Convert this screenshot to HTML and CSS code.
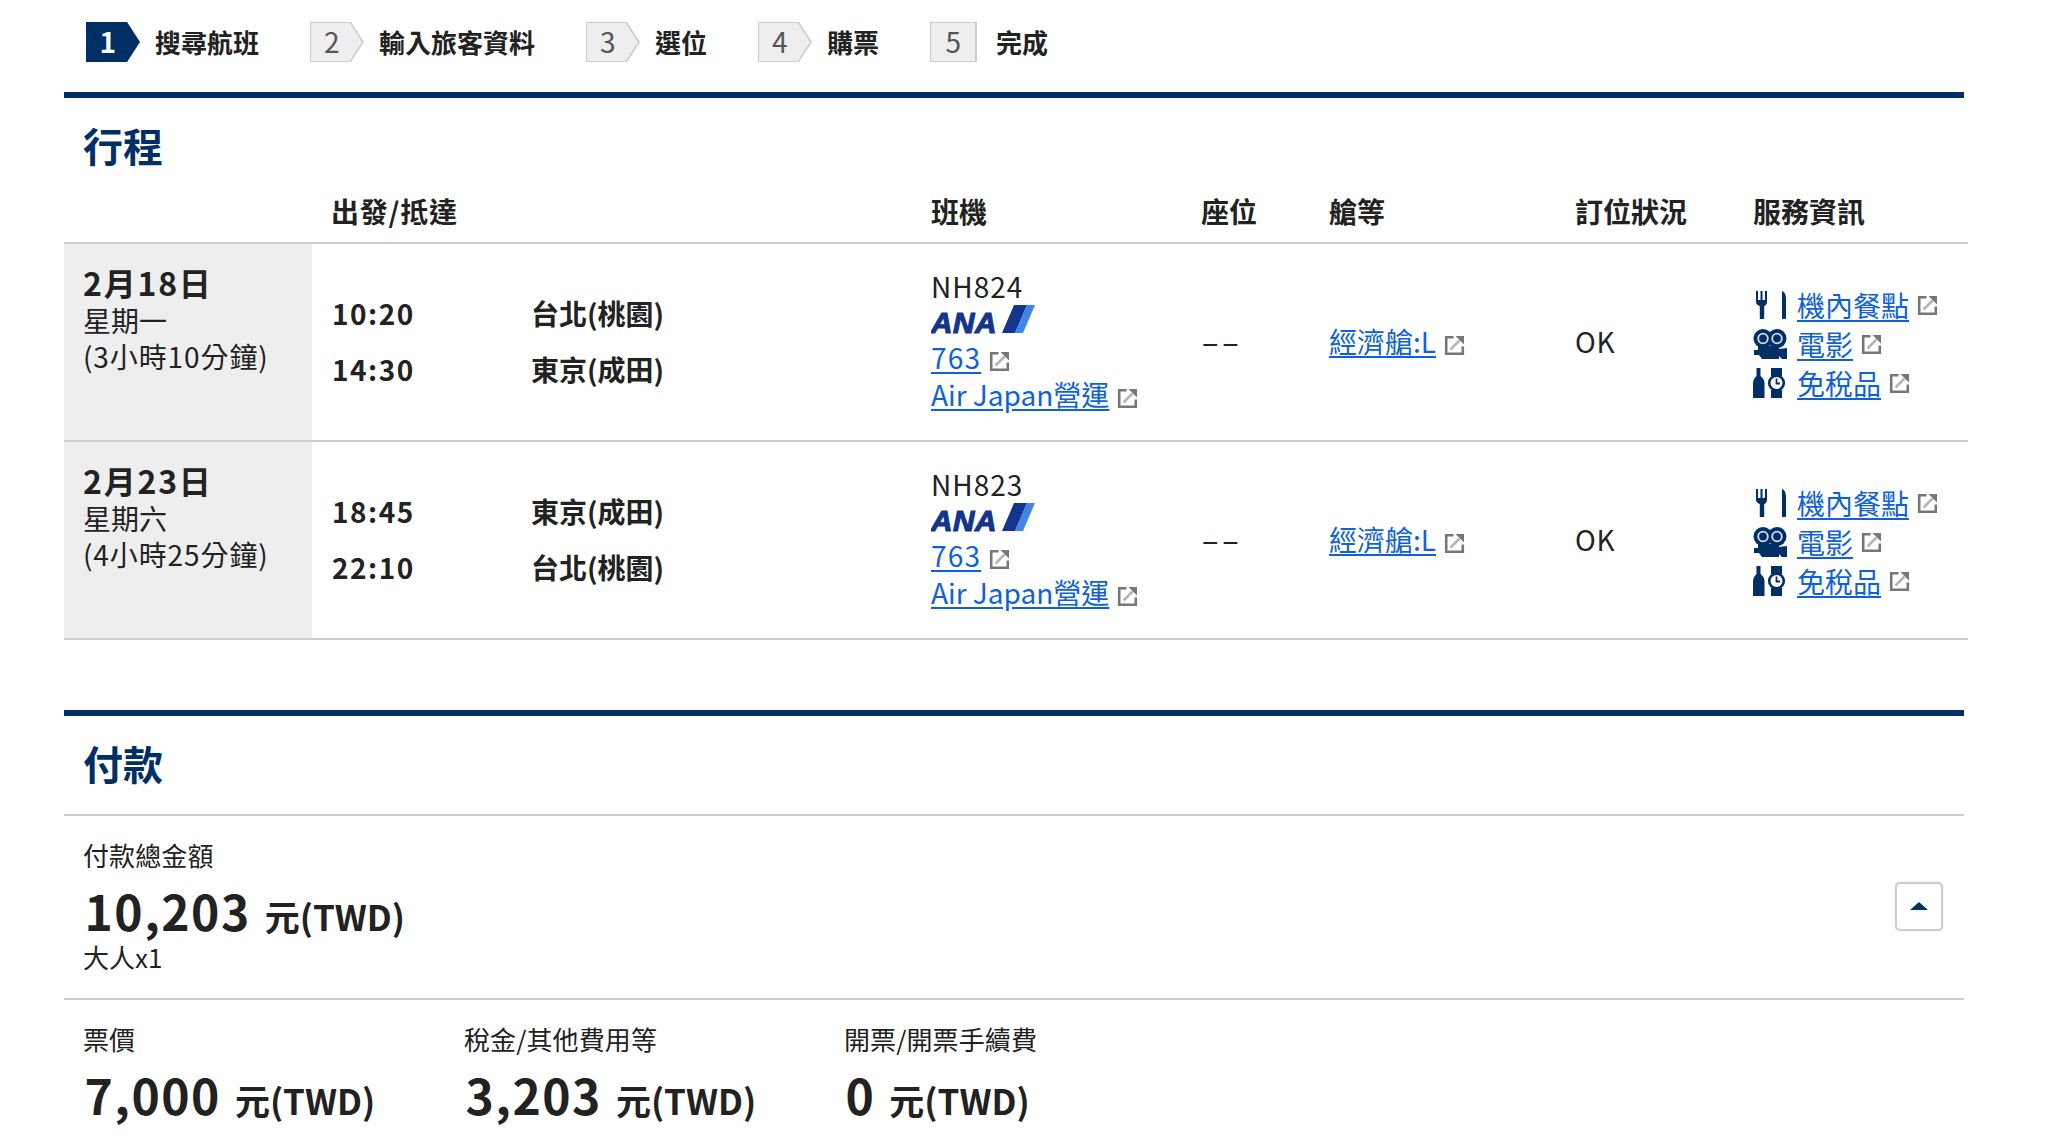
FILE: index.html
```html
<!DOCTYPE html>
<html lang="zh-Hant">
<head>
<meta charset="utf-8">
<title>行程</title>
<link rel="stylesheet" href="styles.css">
</head>
<body>
<svg class="defs" width="0" height="0" aria-hidden="true">
  <symbol id="ext" viewBox="0 0 21 21">
    <path d="M9.500 2.200H2.200v16.600h16.600v-7.300" fill="none" stroke="#777" stroke-width="2.600"/>
    <path d="M11.500 1h8.500v8.500z" fill="#777"/>
    <path d="M6.500 14.500l9-9" fill="none" stroke="#b5b5b5" stroke-width="2.600"/>
  </symbol>
  <symbol id="meal" viewBox="0 0 34 30">
    <path d="M3 1h2v9h2.500V1h2v9H12V1h2v11c0 2.500-1.500 3.500-2.800 4.200V29H6.800V16.200C5.500 15.500 3 14.500 3 12z" fill="#002f66"/>
    <path d="M29 1c3 1 4 4 4 9v18c0 .700-.5 1-1.500 1H30c-1 0-1-.3-1-1z" fill="#002f66"/>
  </symbol>
  <symbol id="movie" viewBox="0 0 34 30">
    <circle cx="10" cy="9.500" r="9.500" fill="#002f66"/>
    <circle cx="24" cy="9.500" r="9.500" fill="#002f66"/>
    <circle cx="10" cy="9.500" r="4.800" fill="#002f66" stroke="#d7dfe9" stroke-width="1.800"/>
    <circle cx="24" cy="9.500" r="4.800" fill="#002f66" stroke="#d7dfe9" stroke-width="1.800"/>
    <path d="M5 17h21v3l8-1v11h-5l-3-3v3H9l-3-4H1v-5h4z" fill="#002f66"/>
  </symbol>
  <symbol id="shop" viewBox="0 0 34 30">
    <path d="M3.500 0h4v8c2.500 2 4 4 4 7v15H0V15c0-3 1.500-5 3.500-7z" fill="#002f66"/>
    <path d="M18 0h11v8H18zM18 22h11v8H18z" fill="#002f66"/>
    <circle cx="23.500" cy="15" r="7.300" fill="#fff" stroke="#002f66" stroke-width="2.600"/>
    <path d="M23.500 10.500v5h3.500" fill="none" stroke="#002f66" stroke-width="1.800"/>
  </symbol>
</svg>

<ol class="steps">
  <li class="step step-now"><span class="step-num">1</span><span class="step-label">搜尋航班</span></li>
  <li class="step"><span class="step-num">2</span><span class="step-label">輸入旅客資料</span></li>
  <li class="step"><span class="step-num">3</span><span class="step-label">選位</span></li>
  <li class="step"><span class="step-num">4</span><span class="step-label">購票</span></li>
  <li class="step step-last"><span class="step-num">5</span><span class="step-label">完成</span></li>
</ol>

<section class="section">
  <h2 class="title">行程</h2>
  <div class="table">
    <div class="row head">
      <div class="cell-date"></div>
      <div class="cell-route head-route">出發/抵達</div>
      <div>班機</div>
      <div>座位</div>
      <div>艙等</div>
      <div>訂位狀況</div>
      <div>服務資訊</div>
    </div>

    <div class="row">
      <div class="cell-date">
        <div class="date">2月18日</div>
        <div class="sub">星期一</div>
        <div class="sub dur">(3小時10分鐘)</div>
      </div>
      <div class="cell-route route">
        <span class="time">10:20</span><span class="city">台北(桃園)</span>
        <span class="time">14:30</span><span class="city">東京(成田)</span>
      </div>
      <div class="flight">
        <div class="no">NH824</div>
        <svg class="ana" viewBox="0 0 104 36">
          <text class="ana-text" x="0" y="28" textLength="66" lengthAdjust="spacingAndGlyphs">ANA</text>
          <path class="ana-dark" d="M83 0h13L84 28H71z"/>
          <path class="ana-light" d="M96 0h8L92 28h-8z"/>
        </svg>
        <div><a class="link link-num" href="#">763</a><svg class="ext"><use href="#ext"/></svg></div>
        <div><a class="link" href="#">Air Japan營運</a><svg class="ext"><use href="#ext"/></svg></div>
      </div>
      <div class="seat"><span class="dash">--</span></div>
      <div class="mid"><a class="link" href="#">經濟艙:L</a><svg class="ext"><use href="#ext"/></svg></div>
      <div class="mid">OK</div>
      <div class="services">
        <div class="service"><svg class="svc"><use href="#meal"/></svg><a class="link" href="#">機內餐點</a><svg class="ext"><use href="#ext"/></svg></div>
        <div class="service"><svg class="svc"><use href="#movie"/></svg><a class="link" href="#">電影</a><svg class="ext"><use href="#ext"/></svg></div>
        <div class="service"><svg class="svc"><use href="#shop"/></svg><a class="link" href="#">免稅品</a><svg class="ext"><use href="#ext"/></svg></div>
      </div>
    </div>

    <div class="row">
      <div class="cell-date">
        <div class="date">2月23日</div>
        <div class="sub">星期六</div>
        <div class="sub dur">(4小時25分鐘)</div>
      </div>
      <div class="cell-route route">
        <span class="time">18:45</span><span class="city">東京(成田)</span>
        <span class="time">22:10</span><span class="city">台北(桃園)</span>
      </div>
      <div class="flight">
        <div class="no">NH823</div>
        <svg class="ana" viewBox="0 0 104 36">
          <text class="ana-text" x="0" y="28" textLength="66" lengthAdjust="spacingAndGlyphs">ANA</text>
          <path class="ana-dark" d="M83 0h13L84 28H71z"/>
          <path class="ana-light" d="M96 0h8L92 28h-8z"/>
        </svg>
        <div><a class="link link-num" href="#">763</a><svg class="ext"><use href="#ext"/></svg></div>
        <div><a class="link" href="#">Air Japan營運</a><svg class="ext"><use href="#ext"/></svg></div>
      </div>
      <div class="seat"><span class="dash">--</span></div>
      <div class="mid"><a class="link" href="#">經濟艙:L</a><svg class="ext"><use href="#ext"/></svg></div>
      <div class="mid">OK</div>
      <div class="services">
        <div class="service"><svg class="svc"><use href="#meal"/></svg><a class="link" href="#">機內餐點</a><svg class="ext"><use href="#ext"/></svg></div>
        <div class="service"><svg class="svc"><use href="#movie"/></svg><a class="link" href="#">電影</a><svg class="ext"><use href="#ext"/></svg></div>
        <div class="service"><svg class="svc"><use href="#shop"/></svg><a class="link" href="#">免稅品</a><svg class="ext"><use href="#ext"/></svg></div>
      </div>
    </div>
  </div>
</section>

<section class="section pay">
  <h2 class="title title-ruled">付款</h2>
  <div class="total">
    <div>
      <div class="pay-label">付款總金額</div>
      <div class="amount">10,203<span class="unit">元(TWD)</span></div>
      <div class="pax">大人x1</div>
    </div>
    <button class="toggle" type="button" aria-label="收合"><span class="tri"></span></button>
  </div>
  <div class="breakdown">
    <div>
      <div class="pay-label">票價</div>
      <div class="amount">7,000<span class="unit">元(TWD)</span></div>
    </div>
    <div>
      <div class="pay-label">稅金/其他費用等</div>
      <div class="amount">3,203<span class="unit">元(TWD)</span></div>
    </div>
    <div>
      <div class="pay-label">開票/開票手續費</div>
      <div class="amount">0<span class="unit">元(TWD)</span></div>
    </div>
  </div>
</section>
</body>
</html>
```

FILE: styles.css
```css
* { box-sizing: border-box; }
html, body { margin: 0; padding: 0; height: 1146px; overflow: hidden; background: #fff; }
body {
  font-family: "Noto Sans CJK TC", "Noto Sans", sans-serif;
  color: #222;
  font-size: 28px;
  letter-spacing: 0.6px;
  line-height: 36px;
}
.defs { position: absolute; }

/* Steps */
.steps {
  list-style: none;
  display: flex;
  margin: 0;
  padding: 22px 0 0 86px;
  height: 92px;
  gap: 51px;
}
.step { display: flex; align-items: center; height: 40px; gap: 15px; }
.step-num {
  position: relative;
  width: 54px;
  height: 40px;
  padding-right: 10px;
  text-align: center;
  font-size: 28px;
  line-height: 38px;
  color: #555;
  isolation: isolate;
}
.step-num::before, .step-num::after {
  content: "";
  position: absolute;
  z-index: -1;
  clip-path: polygon(0 0, 76% 0, 100% 50%, 76% 100%, 0 100%);
}
.step-num::before { inset: 0; background: #ccc; }
.step-num::after { inset: 1px 2px 1px 1px; background: #eee; }
.step-now .step-num { color: #fff; font-weight: 700; }
.step-now .step-num::before, .step-now .step-num::after { background: #002f66; }
.step-last .step-num { width: 47px; padding-right: 0; margin-right: 4px; }
.step-last .step-num::before, .step-last .step-num::after { clip-path: none; }
.step-label { font-size: 26px; font-weight: 700; letter-spacing: 0; white-space: nowrap; line-height: 38px; }

/* Sections */
.section { width: 1900px; margin-left: 64px; border-top: 6px solid #002f66; }
.title {
  margin: 0;
  padding: 17px 0 0 19px;
  height: 80px;
  font-size: 40px;
  line-height: 60px;
  font-weight: 700;
  letter-spacing: 0;
  color: #002f66;
}
.title-ruled { height: 100px; padding-top: 17px; border-bottom: 2px solid #ccc; }

/* Table */
.table { width: 1904px; }
.row {
  display: grid;
  grid-template-columns: 248px 619px 270px 128px 246px 178px 215px;
  align-items: center;
  height: 198px;
  border-bottom: 2px solid #ccc;
}
.row.head {
  height: 66px;
  padding-top: 4px;
  font-size: 28px;
  font-weight: 700;
  letter-spacing: 0;
  padding-bottom: 2px;
}
.cell-date {
  align-self: stretch;
  padding: 18px 0 0 19px;
  background: #eee;
}
.head .cell-date { background: none; }
.cell-route { padding-left: 20px; }
.head-route { letter-spacing: 0.800px; padding-left: 19px; }
.date { font-size: 32px; font-weight: 700; line-height: 40px; letter-spacing: 1.800px; }
.sub { font-size: 28px; line-height: 36px; letter-spacing: 0; }
.dur { letter-spacing: 0.900px; }
.route {
  display: grid;
  grid-template-columns: 199px 1fr;
  row-gap: 20px;
  font-weight: 700;
  margin-bottom: 3px;
}
.time { letter-spacing: 1.500px; }
.city { letter-spacing: 0; }
.mid, .seat, .flight { margin-bottom: 3px; }
.no { line-height: 34px; letter-spacing: 1px; }
.flight { line-height: 37px; }
.ana { display: block; width: 104px; height: 36px; margin: 2px 0 -2px; }
.ana-text {
  font-family: "Liberation Sans", sans-serif;
  font-size: 29px;
  font-weight: 700;
  font-style: italic;
  fill: #14358c;
  stroke: #14358c;
  stroke-width: 1.200px;
}
.ana-dark { fill: #14358c; }
.ana-light { fill: #3f86e6; }
.dash { display: inline-block; letter-spacing: 1px; transform: scaleX(1.900); transform-origin: 0 50%; }
.link { color: #0f62d6; text-decoration: underline; text-underline-offset: 3px; letter-spacing: 0; }
.link-num { letter-spacing: 1.200px; }
.ext { display: inline-block; width: 21px; height: 21px; margin-left: 8px; vertical-align: -3px; }
.services { display: grid; row-gap: 3px; margin-top: 4px; }
.service { display: flex; align-items: center; }
.svc { width: 34px; height: 30px; margin-right: 10px; flex: none; }

/* Payment */
.pay { margin-top: 70px; }
.total {
  display: flex;
  justify-content: space-between;
  align-items: flex-start;
  height: 184px;
  padding: 21px 21px 0 19px;
  border-bottom: 2px solid #ccc;
}
.pay-label { font-size: 26px; line-height: 36px; letter-spacing: 0.100px; }
.amount {
  margin-top: 7px;
  font-size: 48px;
  line-height: 60px;
  font-weight: 700;
  letter-spacing: 1.500px;
  padding-left: 1.500px;
}
.unit { margin-left: 14px; font-size: 35px; letter-spacing: 0; }
.pax { margin-top: -4px; font-size: 26px; line-height: 30px; letter-spacing: 0; }
.toggle {
  display: flex;
  align-self: center;
  align-items: center;
  justify-content: center;
  width: 48px;
  height: 49px;
  margin-bottom: 23px;
  padding: 0;
  background: #fff;
  border: 2px solid #ccc;
  border-radius: 5px;
  box-shadow: 0 0 2px #ddd;
}
.tri { width: 0; height: 0; border: 9px solid transparent; border-top: 0; border-bottom: 8px solid #002f66; }
.breakdown { display: flex; padding: 21px 0 0 19px; }
.breakdown > div { width: 380px; }
.breakdown > div:first-child { width: 381px; }
```
